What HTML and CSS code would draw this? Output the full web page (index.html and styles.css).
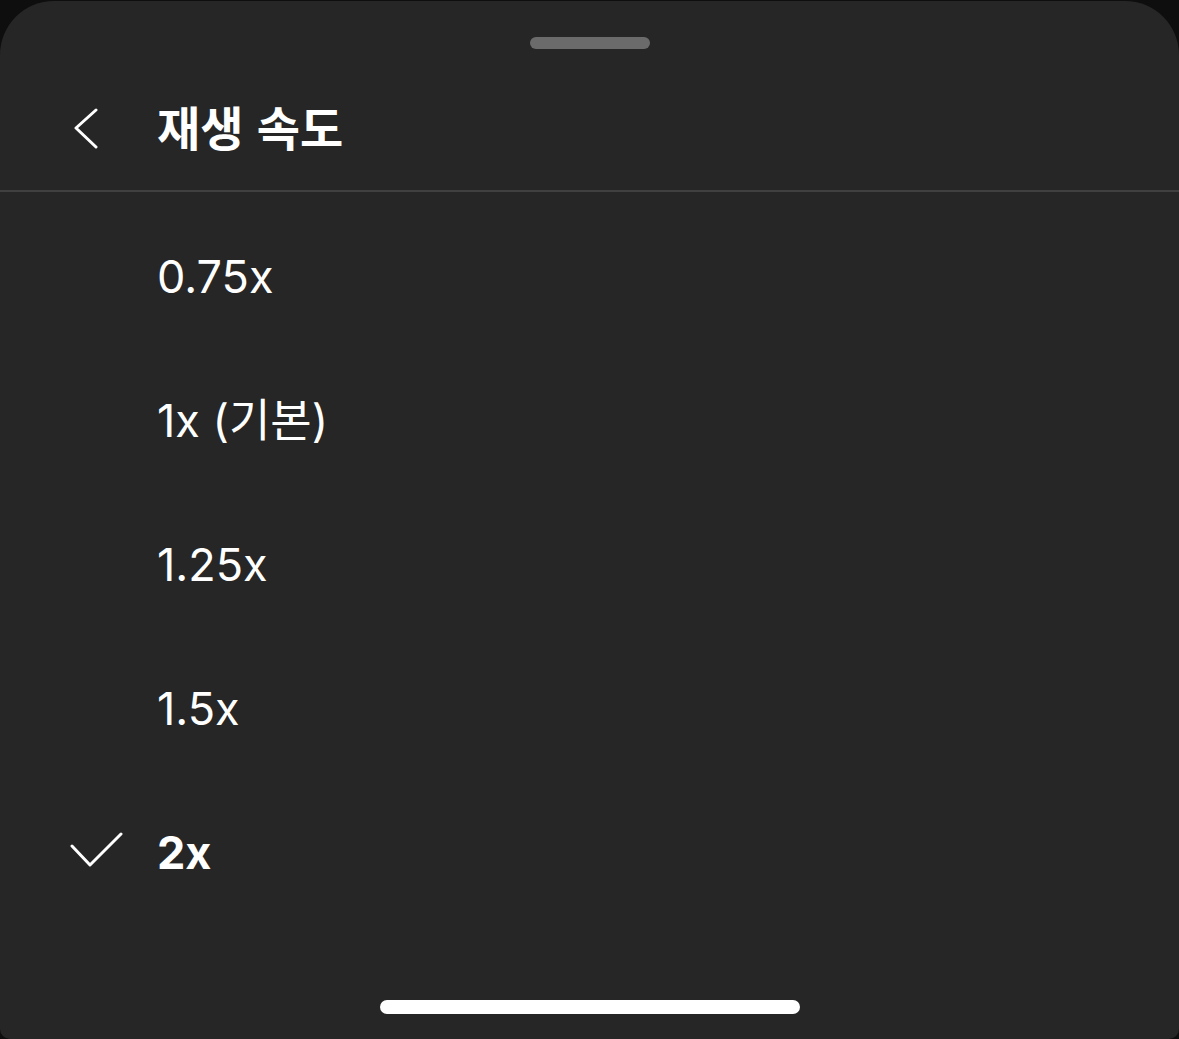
FILE: index.html
```html
<!DOCTYPE html>
<html lang="ko">
<head>
<meta charset="utf-8">
<link rel="stylesheet" href="styles.css">
</head>
<body>
<div class="sheet">
  <div class="handle"></div>
  <div class="header">
    <span class="icon">
      <svg width="50" height="50" viewBox="0 0 50 50"><polyline points="22,2 2,20 22,39" fill="none" stroke="#fff" stroke-width="3" stroke-linecap="round" stroke-linejoin="round"/></svg>
    </span>
    <h1 class="title">재생 속도</h1>
  </div>
  <div class="divider"></div>
  <ul class="list">
    <li class="item"><span class="icon"></span><span class="label">0.75x</span></li>
    <li class="item"><span class="icon"></span><span class="label">1x (기본)</span></li>
    <li class="item"><span class="icon"></span><span class="label">1.25x</span></li>
    <li class="item"><span class="icon"></span><span class="label">1.5x</span></li>
    <li class="item selected"><span class="icon">
      <svg width="56" height="40" viewBox="0 0 56 40"><polyline points="2,14 20,33 51,2" fill="none" stroke="#fff" stroke-width="3" stroke-linecap="round" stroke-linejoin="round"/></svg>
    </span><span class="label">2x</span></li>
  </ul>
  <div class="spacer"></div>
  <div class="home"></div>
</div>
</body>
</html>
```

FILE: styles.css
```css
html, body {
  margin: 0;
  padding: 0;
  background: #0e0e0e;
  height: 1039px;
  overflow: hidden;
}
body {
  padding-top: 1px;
  box-sizing: border-box;
  font-family: Inter, "Noto Sans CJK KR", sans-serif;
  color: #fff;
}
.sheet {
  background: #262626;
  height: 1038px;
  border-radius: 54px 54px 10px 10px;
  display: flex;
  flex-direction: column;
  align-items: stretch;
}
.handle {
  align-self: center;
  width: 120px;
  height: 12px;
  border-radius: 6px;
  background: #6b6b6b;
  margin-top: 36px;
}
.header {
  display: flex;
  align-items: center;
  height: 141px;
  padding-top: 12px;
  box-sizing: border-box;
}
.icon {
  width: 157px;
  display: flex;
  justify-content: flex-start;
  align-items: center;
  flex: none;
}
.header .icon {
  padding-left: 74px;
  box-sizing: border-box;
  padding-top: 14px;
}
.title {
  margin: 0;
  font-family: "Noto Sans CJK KR", sans-serif;
  font-weight: 700;
  font-size: 47px;
  line-height: 1;
}
.divider {
  height: 2px;
  background: #404040;
}
.list {
  list-style: none;
  margin: 0;
  padding: 12px 0 0;
}
.item {
  height: 144px;
  display: flex;
  align-items: center;
}
.item .icon {
  padding-left: 70px;
  box-sizing: border-box;
}
.label {
  font-size: 45px;
  line-height: 1;
  font-weight: 400;
}
.selected .label {
  font-weight: 700;
}
.spacer {
  flex: 1;
}
.home {
  align-self: center;
  width: 420px;
  height: 14px;
  border-radius: 7px;
  background: #fff;
  margin-bottom: 25px;
}
```
